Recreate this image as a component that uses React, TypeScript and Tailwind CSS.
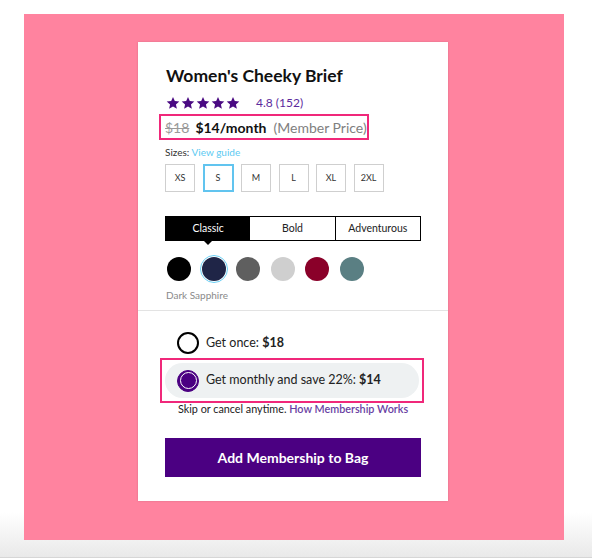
import React from "react";

const Star = () => (
  <svg width="14" height="14" viewBox="0 0 24 24" className="shrink-0">
    <path
      d="M12 1.5l3.1 7.1 7.7.7-5.8 5.1 1.7 7.6L12 18l-6.7 4 1.7-7.6-5.8-5.1 7.7-.7z"
      fill="#4a0a82"
    />
  </svg>
);

export default function App() {
  const sizes = ["XS", "S", "M", "L", "XL", "2XL"];
  const swatches = ["#000000", "#1f2547", "#5f5f5f", "#cfcfcf", "#8a0029", "#5a7f83"];
  return (
    <div
      className="w-[592px] h-[558px] bg-gradient-to-b from-white from-[92%] to-[#e9e9e9] border-b border-[#d6d6d6] pt-[14px] pl-[24px]"
      style={{ fontFamily: "Lato, 'Open Sans', Arial, sans-serif" }}
    >
      <div className="w-[540px] h-[526px] bg-[#ff839f] pl-[114px] pt-[28px]">
        <div className="w-[310px] h-[459px] bg-white pl-[27px] pr-[27px] pt-[24px] flex flex-col shadow-[0_0_2px_rgba(0,0,0,0.15)]">
          <div className="text-[17.5px] leading-[20px] font-bold text-[#111] ml-px">Women's Cheeky Brief</div>
          <div className="mt-[9px] h-[16px] flex items-center">
            <div className="flex gap-[1px] ml-px">
              <Star />
              <Star />
              <Star />
              <Star />
              <Star />
            </div>
            <span className="ml-[16px] text-[12px] text-[#5c2a9d]">4.8 (152)</span>
          </div>
          <div className="mt-[3px] -ml-[6px] w-[210px] h-[26px] border-2 border-[#f0287a] flex items-center pl-[4px] text-[14px]">
            <span className="text-[#9a9a9a] line-through">$18</span>
            <span className="ml-[6px] font-bold text-[#111]">$14/month</span>
            <span className="ml-[7px] text-[#808080]">(Member Price)</span>
          </div>
          <div className="mt-[5px] text-[10px] leading-[14px] text-[#333]">
            Sizes: <span className="text-[#5ccaf2]">View guide</span>
          </div>
          <div className="mt-[5px] flex gap-[7.5px]">
            {sizes.map((s) => (
              <div
                key={s}
                className={
                  s === "S"
                    ? "w-[31px] h-[28px] border-2 border-[#61c4ef] flex items-center justify-center text-[9px] text-[#333]"
                    : "w-[30px] h-[28px] border border-[#cfcfcf] flex items-center justify-center text-[9px] text-[#333]"
                }
              >
                {s}
              </div>
            ))}
          </div>
          <div className="mt-[24px] relative flex h-[25px] border border-black text-[10.5px]">
            <div className="flex-1 bg-black text-white flex items-center justify-center relative">
              Classic
              <div className="absolute left-1/2 -translate-x-1/2 top-full w-0 h-0 border-l-[5px] border-r-[5px] border-t-[5px] border-l-transparent border-r-transparent border-t-black" />
            </div>
            <div className="flex-1 flex items-center justify-center text-[#222] border-r border-black">Bold</div>
            <div className="flex-1 flex items-center justify-center text-[#222]">Adventurous</div>
          </div>
          <div className="mt-[14px] flex gap-[6.5px] items-center">
            {swatches.map((c, i) => (
              <div
                key={c}
                className={
                  i === 1
                    ? "w-[28px] h-[28px] rounded-full border-[1.5px] border-[#6cd0f5] flex items-center justify-center"
                    : "w-[28px] h-[28px] flex items-center justify-center"
                }
              >
                <div className="w-[24px] h-[24px] rounded-full" style={{ backgroundColor: c }} />
              </div>
            ))}
          </div>
          <div className="mt-[5px] text-[10px] leading-[14px] text-[#8a8a8a] ml-px">Dark Sapphire</div>
          <div className="mt-[8px] -mx-[27px] h-px bg-[#e3e3e3]" />
          <div className="mt-[21px] flex items-center h-[22px] ml-[12px]">
            <div className="w-[22px] h-[22px] rounded-full border-2 border-black" />
            <span className="ml-[7px] text-[12.5px] text-[#222]">
              Get once: <b>$18</b>
            </span>
          </div>
          <div className="mt-[4px] -ml-[5px] w-[264px] h-[45px] border-2 border-[#f0287a] p-[3px]">
            <div className="h-full rounded-[18px] bg-[#eef1f2] flex items-center pl-[12px]">
              <div className="w-[22px] h-[22px] rounded-full bg-[#4b0082] border-[1.5px] border-[#4b0082] flex items-center justify-center">
                <div className="w-[17px] h-[17px] rounded-full border border-white bg-[#4b0082]" />
              </div>
              <span className="ml-[7px] text-[12.5px] text-[#222]">
                Get monthly and save 22%: <b>$14</b>
              </span>
            </div>
          </div>
          <div className="mt-0 text-[10.8px] leading-[12px] text-[#222] ml-[13px]">
            Skip or cancel anytime. <span className="text-[#6a3fa3] font-semibold">How Membership Works</span>
          </div>
          <div className="mt-[23px] h-[39px] bg-[#4b0082] flex items-center justify-center text-white text-[14px] font-bold">
            Add Membership to Bag
          </div>
        </div>
      </div>
    </div>
  );
}
